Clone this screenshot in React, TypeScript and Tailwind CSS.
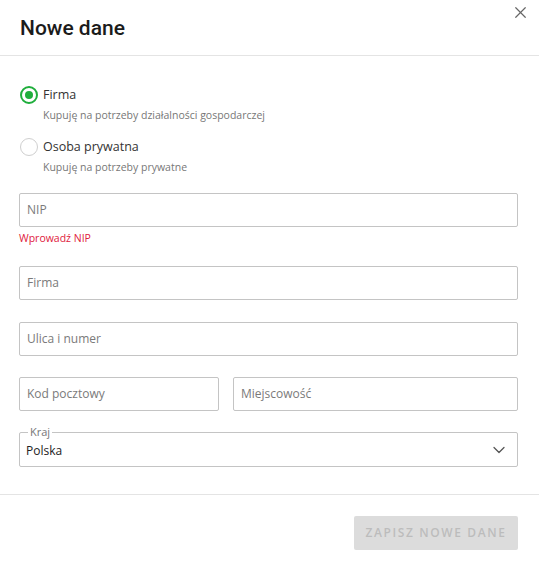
import { X, ChevronDown } from 'lucide-react';

const Field = ({ placeholder, className = '' }: { placeholder: string; className?: string }) => (
  <div className={`h-[34px] border border-[#c4c4c4] rounded-[2px] flex items-center px-[7px] ${className}`}>
    <span className="text-[12px] text-[#7a7a7a]">{placeholder}</span>
  </div>
);

const Radio = ({ checked, label, hint }: { checked: boolean; label: string; hint: string }) => (
  <div className="flex items-start">
    <div
      className={`w-[18px] h-[18px] rounded-full flex items-center justify-center flex-shrink-0 mt-[1px] ${
        checked ? 'border-2 border-[#1fae3c]' : 'border border-[#cfcfcf]'
      }`}
    >
      {checked && <div className="w-[8px] h-[8px] rounded-full bg-[#1fae3c]" />}
    </div>
    <div className="ml-[5px]">
      <p className="text-[12.5px] leading-[20px] text-[#333]">{label}</p>
      <p className="text-[10.5px] leading-[16px] text-[#777] mt-[2px]">{hint}</p>
    </div>
  </div>
);

const App = () => {
  return (
    <div className="w-[539px] h-[566px] bg-white relative font-['Open_Sans',sans-serif]">
      {/* Header */}
      <div className="h-[56px] border-b border-[#e4e4e4] flex items-center px-[20px]">
        <h1 className="font-['Roboto',sans-serif] text-[21px] font-medium text-[#1b1b1b] pt-[2px]">Nowe dane</h1>
      </div>
      <button className="absolute top-[3px] right-[9px] text-[#666]">
        <X className="w-[19px] h-[19px]" strokeWidth={1.5} />
      </button>

      {/* Body */}
      <div className="pl-[19px] pr-[21px] pt-[29px]">
        <div className="space-y-[14px] pl-[1px]">
          <Radio checked label="Firma" hint="Kupuję na potrzeby działalności gospodarczej" />
          <Radio checked={false} label="Osoba prywatna" hint="Kupuję na potrzeby prywatne" />
        </div>

        <div className="mt-[18px]">
          <Field placeholder="NIP" />
          <p className="text-[10.5px] text-[#e0203c] mt-[3px] leading-[16px]">Wprowadź NIP</p>
        </div>

        <Field placeholder="Firma" className="mt-[20px]" />
        <Field placeholder="Ulica i numer" className="mt-[22px]" />

        <div className="flex gap-[14px] mt-[21px]">
          <Field placeholder="Kod pocztowy" className="w-[200px]" />
          <Field placeholder="Miejscowość" className="flex-1" />
        </div>

        <div className="relative mt-[21px] h-[35px] border border-[#c4c4c4] rounded-[2px] flex items-center justify-between pl-[6px] pr-[8px]">
          <span className="absolute -top-[8px] left-[8px] bg-white px-[2px] text-[11px] leading-[14px] text-[#777]">Kraj</span>
          <span className="text-[12px] text-[#222] pt-[2px]">Polska</span>
          <ChevronDown className="w-[20px] h-[20px] text-[#555]" strokeWidth={1.5} />
        </div>
      </div>

      {/* Footer */}
      <div className="border-t border-[#e4e4e4] mt-[27px] flex justify-end px-[21px] pt-[21px]">
        <button className="w-[164px] h-[34px] bg-[#dcdcdc] rounded-[2px] text-[12px] tracking-[1.6px] text-[#bcbcbc] font-semibold">
          ZAPISZ NOWE DANE
        </button>
      </div>
    </div>
  );
};

export default App;
